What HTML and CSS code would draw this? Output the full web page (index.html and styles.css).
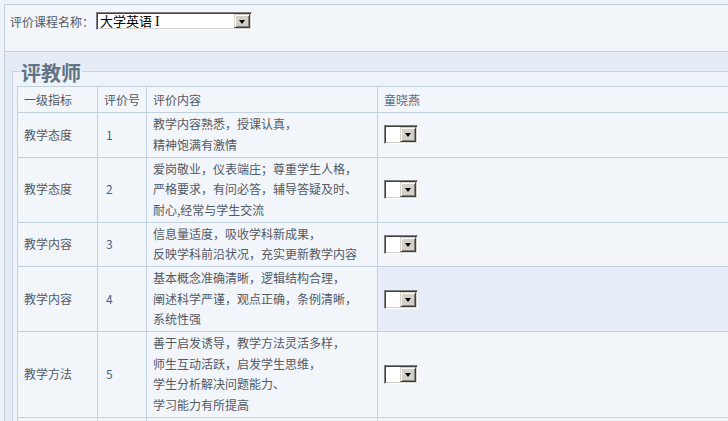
FILE: index.html
```html
<!DOCTYPE html>
<html lang="zh-CN">
<head>
<meta charset="utf-8">
<title>评教</title>
<link rel="stylesheet" href="styles.css">
</head>
<body>
<div class="page">
  <div class="toolbar">
    <span class="label">评价课程名称：</span>
    <div class="combo combo-wide"><span class="combo-text">大学英语 <span class="roman">I</span></span><span class="combo-btn"></span></div>
  </div>
  <div class="section">
    <fieldset class="box">
      <legend class="box-title">评教师</legend>
      <table class="grid">
        <colgroup>
          <col class="c1"><col class="c2"><col class="c3"><col class="c4">
        </colgroup>
        <thead>
          <tr><th>一级指标</th><th>评价号</th><th>评价内容</th><th class="teacher">童晓燕</th></tr>
        </thead>
        <tbody>
          <tr>
            <td>教学态度</td><td class="num">1</td>
            <td>教学内容熟悉，授课认真，<br>精神饱满有激情</td>
            <td><div class="combo combo-small"><span class="combo-text"></span><span class="combo-btn"></span></div></td>
          </tr>
          <tr>
            <td>教学态度</td><td class="num">2</td>
            <td>爱岗敬业，仪表端庄；尊重学生人格，<br>严格要求，有问必答，辅导答疑及时、<br>耐心,经常与学生交流</td>
            <td><div class="combo combo-small"><span class="combo-text"></span><span class="combo-btn"></span></div></td>
          </tr>
          <tr>
            <td>教学内容</td><td class="num">3</td>
            <td>信息量适度，吸收学科新成果，<br>反映学科前沿状况，充实更新教学内容</td>
            <td><div class="combo combo-small"><span class="combo-text"></span><span class="combo-btn"></span></div></td>
          </tr>
          <tr>
            <td>教学内容</td><td class="num">4</td>
            <td>基本概念准确清晰，逻辑结构合理，<br>阐述科学严谨，观点正确，条例清晰，<br>系统性强</td>
            <td class="hl"><div class="combo combo-small"><span class="combo-text"></span><span class="combo-btn"></span></div></td>
          </tr>
          <tr>
            <td>教学方法</td><td class="num">5</td>
            <td>善于启发诱导，教学方法灵活多样，<br>师生互动活跃，启发学生思维，<br>学生分析解决问题能力、<br>学习能力有所提高</td>
            <td><div class="combo combo-small"><span class="combo-text"></span><span class="combo-btn"></span></div></td>
          </tr>
          <tr>
            <td>教学方法</td><td class="num">6</td>
            <td>注重因材施教，<br>讲究教学艺术</td>
            <td><div class="combo combo-small"><span class="combo-text"></span><span class="combo-btn"></span></div></td>
          </tr>
        </tbody>
      </table>
    </fieldset>
  </div>
</div>
</body>
</html>
```

FILE: styles.css
```css
html, body {
  margin: 0;
  padding: 0;
  overflow: hidden;
}
body {
  background: #eef3f9;
  font-family: "Noto Sans CJK SC", "Liberation Sans", sans-serif;
  font-size: 12px;
  color: #525a64;
}
.page {
  width: 820px;
  margin: 4px 0 0 4px;
  border-top: 1px solid #c3d1de;
  border-left: 1px solid #c3d1de;
  background: #f2f5fa;
}
.toolbar {
  box-sizing: border-box;
  height: 46px;
  padding: 7px 0 0 5px;
  display: flex;
  align-items: flex-start;
}
.label {
  line-height: 18px;
  padding-top: 1px;
}
.combo {
  box-sizing: border-box;
  display: flex;
  background: #fff;
  border: 1px solid;
  border-color: #808080 #ffffff #ffffff #808080;
  box-shadow: inset 1px 1px 0 #404040, inset -1px -1px 0 #d4d0c8;
  padding: 1px;
}
.combo-wide {
  width: 156px;
  height: 18px;
  margin-left: 2px;
}
.combo-small {
  width: 34px;
  height: 19px;
}
.combo-text {
  flex: 1;
  color: #000;
  font-size: 13px;
  line-height: 14px;
  padding-left: 2px;
  white-space: nowrap;
  overflow: hidden;
}
.roman {
  font-family: "Liberation Serif", serif;
  font-size: 14px;
}
.combo-btn {
  box-sizing: border-box;
  width: 16px;
  background: #d4d0c8;
  border: 1px solid;
  border-color: #d4d0c8 #404040 #404040 #d4d0c8;
  box-shadow: inset 1px 1px 0 #ffffff, inset -1px -1px 0 #808080;
  display: flex;
  align-items: center;
  justify-content: center;
}
.combo-btn::after {
  content: "";
  width: 0;
  height: 0;
  margin-top: 1px;
  border-top: 4px solid #000;
  border-left: 3.5px solid transparent;
  border-right: 3.5px solid transparent;
}
.section {
  border-top: 1px solid #c3d1de;
  background: #e5ecf6;
  padding: 6px 0 20px 0;
}
.box {
  margin: 0 0 0 7px;
  padding: 1px 0 0 4px;
  border: 1px solid #c9d0e6;
  background: #eef3f9;
}
.box-title {
  margin-left: 3px;
  padding: 3px 1px 0;
  font-size: 20px;
  line-height: 24px;
  font-weight: bold;
  color: #627386;
}
.grid {
  border-collapse: collapse;
  table-layout: fixed;
  width: 800px;
  background: #f2f5fa;
}
.c1 { width: 80px; }
.c2 { width: 49px; }
.c3 { width: 231px; }
.grid th,
.grid td {
  border: 1px solid #c2d1de;
  padding: 1.25px 6px;
  line-height: 20.5px;
  text-align: left;
  vertical-align: middle;
  font-weight: normal;
}
.grid th {
  line-height: 22px;
  padding-top: 1.5px;
  padding-bottom: 1.5px;
}
.grid th.teacher {
  color: #5a6e86;
}
.grid td.num {
  color: #4a6384;
  padding-left: 8px;
}
.grid td.hl {
  background: #e6edf8;
}
```
